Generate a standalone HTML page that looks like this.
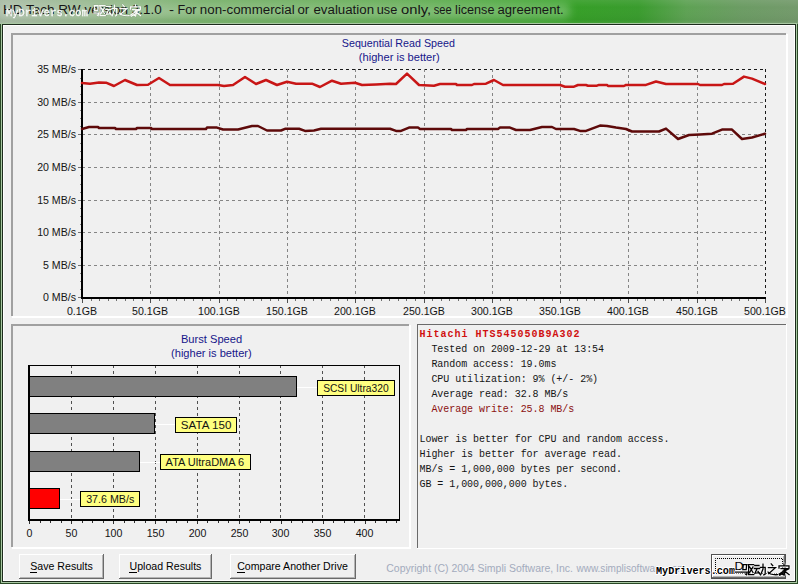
<!DOCTYPE html><html><head><meta charset="utf-8"><style>
html,body{margin:0;padding:0;width:798px;height:584px;overflow:hidden;background:#f0f0f0;}
svg{position:absolute;left:0;top:0;display:block}
text{font-family:"Liberation Sans", sans-serif;}
.m{font-family:"Liberation Mono", monospace;}
</style></head><body>
<svg width="798" height="584" viewBox="0 0 798 584">
<defs>
<linearGradient id="tbh" x1="0" y1="0" x2="798" y2="0" gradientUnits="userSpaceOnUse"><stop offset="0" stop-color="#a2b79e"/><stop offset="0.15" stop-color="#86b07b"/><stop offset="0.25" stop-color="#6caa5e"/><stop offset="0.5" stop-color="#58a648"/><stop offset="0.7" stop-color="#35a026"/><stop offset="0.8" stop-color="#3a9c2e"/><stop offset="0.86" stop-color="#5ea254"/><stop offset="0.93" stop-color="#6c9c64"/><stop offset="1" stop-color="#749a6c"/></linearGradient>
<linearGradient id="tbv" x1="0" y1="0" x2="0" y2="1"><stop offset="0" stop-color="#ffffff" stop-opacity="0.08"/><stop offset="0.3" stop-color="#ffffff" stop-opacity="0.0"/><stop offset="0.8" stop-color="#000000" stop-opacity="0.03"/><stop offset="1" stop-color="#ffffff" stop-opacity="0.1"/></linearGradient>
<filter id="blur4" x="-20%" y="-100%" width="140%" height="300%"><feGaussianBlur stdDeviation="4"/></filter>
<filter id="wm" x="-10%" y="-50%" width="120%" height="200%"><feMorphology in="SourceAlpha" operator="dilate" radius="0.8" result="d"/><feFlood flood-color="#000"/><feComposite in2="d" operator="in" result="o"/><feMerge><feMergeNode in="o"/><feMergeNode in="SourceGraphic"/></feMerge></filter>
<filter id="wmw" x="-10%" y="-50%" width="120%" height="200%"><feMorphology in="SourceAlpha" operator="dilate" radius="0.8" result="d"/><feFlood flood-color="#fff"/><feComposite in2="d" operator="in" result="o"/><feMerge><feMergeNode in="o"/><feMergeNode in="SourceGraphic"/></feMerge></filter>
</defs>
<rect x="0" y="0" width="798" height="584" fill="#6a9c62"/>
<rect x="0" y="0" width="798" height="24" fill="url(#tbh)"/>
<rect x="0" y="0" width="798" height="24" fill="url(#tbv)"/>
<rect x="-2" y="3" width="572" height="16" rx="6" fill="#ffffff" opacity="0.26" filter="url(#blur4)"/>
<g shape-rendering="crispEdges">
<rect x="1" y="23" width="796" height="560" fill="#a9c8a3"/>
<rect x="0" y="24" width="1" height="560" fill="#2a4a26"/><rect x="797" y="24" width="1" height="560" fill="#2a4a26"/><rect x="0" y="583" width="798" height="1" fill="#2a4a26"/>
<rect x="2" y="24" width="794" height="558" fill="#1c2a1c"/>
<rect x="3" y="25" width="792" height="556" fill="#ffffff"/>
<rect x="4" y="26" width="790" height="554" fill="#f0f0f0"/>
<rect x="11" y="33" width="775" height="2" fill="#a0a0a0"/>
<rect x="11" y="33" width="2" height="283" fill="#a0a0a0"/>
<rect x="12" y="316" width="776" height="2" fill="#ffffff"/>
<rect x="786" y="34" width="2" height="284" fill="#ffffff"/>
<rect x="11" y="324" width="398" height="2" fill="#a0a0a0"/>
<rect x="11" y="324" width="2" height="223" fill="#a0a0a0"/>
<rect x="12" y="547" width="399" height="2" fill="#ffffff"/>
<rect x="409" y="325" width="2" height="224" fill="#ffffff"/>
</g>
<g shape-rendering="crispEdges">
<line x1="82" y1="69.5" x2="766" y2="69.5" stroke="#1a1a1a" stroke-width="1" stroke-dasharray="3,3" stroke-dashoffset="0"/>
<line x1="82" y1="102.5" x2="766" y2="102.5" stroke="#858585" stroke-width="1" stroke-dasharray="3,3" stroke-dashoffset="0"/>
<line x1="82" y1="134.5" x2="766" y2="134.5" stroke="#858585" stroke-width="1" stroke-dasharray="3,3" stroke-dashoffset="0"/>
<line x1="82" y1="167.5" x2="766" y2="167.5" stroke="#858585" stroke-width="1" stroke-dasharray="3,3" stroke-dashoffset="0"/>
<line x1="82" y1="200.5" x2="766" y2="200.5" stroke="#858585" stroke-width="1" stroke-dasharray="3,3" stroke-dashoffset="0"/>
<line x1="82" y1="232.5" x2="766" y2="232.5" stroke="#858585" stroke-width="1" stroke-dasharray="3,3" stroke-dashoffset="0"/>
<line x1="82" y1="265.5" x2="766" y2="265.5" stroke="#858585" stroke-width="1" stroke-dasharray="3,3" stroke-dashoffset="0"/>
<line x1="150.5" y1="69" x2="150.5" y2="298" stroke="#858585" stroke-width="1" stroke-dasharray="3,3"/>
<line x1="219.5" y1="69" x2="219.5" y2="298" stroke="#858585" stroke-width="1" stroke-dasharray="3,3"/>
<line x1="287.5" y1="69" x2="287.5" y2="298" stroke="#858585" stroke-width="1" stroke-dasharray="3,3"/>
<line x1="355.5" y1="69" x2="355.5" y2="298" stroke="#858585" stroke-width="1" stroke-dasharray="3,3"/>
<line x1="424.5" y1="69" x2="424.5" y2="298" stroke="#858585" stroke-width="1" stroke-dasharray="3,3"/>
<line x1="492.5" y1="69" x2="492.5" y2="298" stroke="#858585" stroke-width="1" stroke-dasharray="3,3"/>
<line x1="560.5" y1="69" x2="560.5" y2="298" stroke="#858585" stroke-width="1" stroke-dasharray="3,3"/>
<line x1="628.5" y1="69" x2="628.5" y2="298" stroke="#858585" stroke-width="1" stroke-dasharray="3,3"/>
<line x1="697.5" y1="69" x2="697.5" y2="298" stroke="#858585" stroke-width="1" stroke-dasharray="3,3"/>
<line x1="765.5" y1="69" x2="765.5" y2="298" stroke="#1a1a1a" stroke-width="1" stroke-dasharray="3,3"/>
<rect x="78" y="69" width="3" height="1" fill="#707070"/>
<rect x="78" y="102" width="3" height="1" fill="#707070"/>
<rect x="78" y="134" width="3" height="1" fill="#707070"/>
<rect x="78" y="167" width="3" height="1" fill="#707070"/>
<rect x="78" y="200" width="3" height="1" fill="#707070"/>
<rect x="78" y="232" width="3" height="1" fill="#707070"/>
<rect x="78" y="265" width="3" height="1" fill="#707070"/>
<rect x="78" y="297" width="3" height="1" fill="#707070"/>
<rect x="82" y="298" width="1" height="5" fill="#505050"/>
<rect x="150" y="298" width="1" height="5" fill="#505050"/>
<rect x="219" y="298" width="1" height="5" fill="#505050"/>
<rect x="287" y="298" width="1" height="5" fill="#505050"/>
<rect x="355" y="298" width="1" height="5" fill="#505050"/>
<rect x="424" y="298" width="1" height="5" fill="#505050"/>
<rect x="492" y="298" width="1" height="5" fill="#505050"/>
<rect x="560" y="298" width="1" height="5" fill="#505050"/>
<rect x="628" y="298" width="1" height="5" fill="#505050"/>
<rect x="697" y="298" width="1" height="5" fill="#505050"/>
<rect x="765" y="298" width="1" height="5" fill="#505050"/>
<rect x="91" y="299" width="1" height="1.5" fill="#707070"/>
<rect x="99" y="299" width="1" height="1.5" fill="#707070"/>
<rect x="108" y="299" width="1" height="1.5" fill="#707070"/>
<rect x="116" y="299" width="1" height="1.5" fill="#707070"/>
<rect x="125" y="299" width="1" height="1.5" fill="#707070"/>
<rect x="133" y="299" width="1" height="1.5" fill="#707070"/>
<rect x="142" y="299" width="1" height="1.5" fill="#707070"/>
<rect x="159" y="299" width="1" height="1.5" fill="#707070"/>
<rect x="167" y="299" width="1" height="1.5" fill="#707070"/>
<rect x="176" y="299" width="1" height="1.5" fill="#707070"/>
<rect x="184" y="299" width="1" height="1.5" fill="#707070"/>
<rect x="193" y="299" width="1" height="1.5" fill="#707070"/>
<rect x="202" y="299" width="1" height="1.5" fill="#707070"/>
<rect x="210" y="299" width="1" height="1.5" fill="#707070"/>
<rect x="227" y="299" width="1" height="1.5" fill="#707070"/>
<rect x="236" y="299" width="1" height="1.5" fill="#707070"/>
<rect x="244" y="299" width="1" height="1.5" fill="#707070"/>
<rect x="253" y="299" width="1" height="1.5" fill="#707070"/>
<rect x="261" y="299" width="1" height="1.5" fill="#707070"/>
<rect x="270" y="299" width="1" height="1.5" fill="#707070"/>
<rect x="278" y="299" width="1" height="1.5" fill="#707070"/>
<rect x="295" y="299" width="1" height="1.5" fill="#707070"/>
<rect x="304" y="299" width="1" height="1.5" fill="#707070"/>
<rect x="313" y="299" width="1" height="1.5" fill="#707070"/>
<rect x="321" y="299" width="1" height="1.5" fill="#707070"/>
<rect x="330" y="299" width="1" height="1.5" fill="#707070"/>
<rect x="338" y="299" width="1" height="1.5" fill="#707070"/>
<rect x="347" y="299" width="1" height="1.5" fill="#707070"/>
<rect x="364" y="299" width="1" height="1.5" fill="#707070"/>
<rect x="372" y="299" width="1" height="1.5" fill="#707070"/>
<rect x="381" y="299" width="1" height="1.5" fill="#707070"/>
<rect x="389" y="299" width="1" height="1.5" fill="#707070"/>
<rect x="398" y="299" width="1" height="1.5" fill="#707070"/>
<rect x="406" y="299" width="1" height="1.5" fill="#707070"/>
<rect x="415" y="299" width="1" height="1.5" fill="#707070"/>
<rect x="432" y="299" width="1" height="1.5" fill="#707070"/>
<rect x="441" y="299" width="1" height="1.5" fill="#707070"/>
<rect x="449" y="299" width="1" height="1.5" fill="#707070"/>
<rect x="458" y="299" width="1" height="1.5" fill="#707070"/>
<rect x="466" y="299" width="1" height="1.5" fill="#707070"/>
<rect x="475" y="299" width="1" height="1.5" fill="#707070"/>
<rect x="483" y="299" width="1" height="1.5" fill="#707070"/>
<rect x="500" y="299" width="1" height="1.5" fill="#707070"/>
<rect x="509" y="299" width="1" height="1.5" fill="#707070"/>
<rect x="517" y="299" width="1" height="1.5" fill="#707070"/>
<rect x="526" y="299" width="1" height="1.5" fill="#707070"/>
<rect x="534" y="299" width="1" height="1.5" fill="#707070"/>
<rect x="543" y="299" width="1" height="1.5" fill="#707070"/>
<rect x="552" y="299" width="1" height="1.5" fill="#707070"/>
<rect x="569" y="299" width="1" height="1.5" fill="#707070"/>
<rect x="577" y="299" width="1" height="1.5" fill="#707070"/>
<rect x="586" y="299" width="1" height="1.5" fill="#707070"/>
<rect x="594" y="299" width="1" height="1.5" fill="#707070"/>
<rect x="603" y="299" width="1" height="1.5" fill="#707070"/>
<rect x="611" y="299" width="1" height="1.5" fill="#707070"/>
<rect x="620" y="299" width="1" height="1.5" fill="#707070"/>
<rect x="637" y="299" width="1" height="1.5" fill="#707070"/>
<rect x="645" y="299" width="1" height="1.5" fill="#707070"/>
<rect x="654" y="299" width="1" height="1.5" fill="#707070"/>
<rect x="663" y="299" width="1" height="1.5" fill="#707070"/>
<rect x="671" y="299" width="1" height="1.5" fill="#707070"/>
<rect x="680" y="299" width="1" height="1.5" fill="#707070"/>
<rect x="688" y="299" width="1" height="1.5" fill="#707070"/>
<rect x="705" y="299" width="1" height="1.5" fill="#707070"/>
<rect x="714" y="299" width="1" height="1.5" fill="#707070"/>
<rect x="722" y="299" width="1" height="1.5" fill="#707070"/>
<rect x="731" y="299" width="1" height="1.5" fill="#707070"/>
<rect x="739" y="299" width="1" height="1.5" fill="#707070"/>
<rect x="748" y="299" width="1" height="1.5" fill="#707070"/>
<rect x="756" y="299" width="1" height="1.5" fill="#707070"/>
<rect x="80" y="289" width="1" height="1" fill="#8a8a8a"/>
<rect x="80" y="281" width="1" height="1" fill="#8a8a8a"/>
<rect x="80" y="273" width="1" height="1" fill="#8a8a8a"/>
<rect x="80" y="257" width="1" height="1" fill="#8a8a8a"/>
<rect x="80" y="249" width="1" height="1" fill="#8a8a8a"/>
<rect x="80" y="241" width="1" height="1" fill="#8a8a8a"/>
<rect x="80" y="224" width="1" height="1" fill="#8a8a8a"/>
<rect x="80" y="216" width="1" height="1" fill="#8a8a8a"/>
<rect x="80" y="208" width="1" height="1" fill="#8a8a8a"/>
<rect x="80" y="192" width="1" height="1" fill="#8a8a8a"/>
<rect x="80" y="184" width="1" height="1" fill="#8a8a8a"/>
<rect x="80" y="175" width="1" height="1" fill="#8a8a8a"/>
<rect x="80" y="159" width="1" height="1" fill="#8a8a8a"/>
<rect x="80" y="151" width="1" height="1" fill="#8a8a8a"/>
<rect x="80" y="143" width="1" height="1" fill="#8a8a8a"/>
<rect x="80" y="126" width="1" height="1" fill="#8a8a8a"/>
<rect x="80" y="118" width="1" height="1" fill="#8a8a8a"/>
<rect x="80" y="110" width="1" height="1" fill="#8a8a8a"/>
<rect x="80" y="94" width="1" height="1" fill="#8a8a8a"/>
<rect x="80" y="86" width="1" height="1" fill="#8a8a8a"/>
<rect x="80" y="78" width="1" height="1" fill="#8a8a8a"/>
<rect x="81" y="69" width="2" height="230" fill="#000"/>
<rect x="81" y="297" width="685" height="2" fill="#000"/>
</g>
<polyline points="82.0,83.1 90.0,83.7 99.0,82.5 106.0,82.7 114.0,86.0 125.0,80.0 137.0,85.0 148.0,84.7 159.0,78.0 170.0,85.0 218.0,85.0 224.0,86.0 233.0,85.0 245.0,77.0 256.0,84.0 266.0,80.0 277.0,85.0 287.0,81.7 296.0,83.7 312.0,83.7 320.0,87.0 332.0,80.7 341.0,83.7 355.0,82.7 362.0,85.0 376.0,84.5 390.0,83.7 396.0,84.0 407.0,73.6 419.0,85.0 434.0,85.7 440.0,84.0 456.0,84.0 457.0,85.0 472.0,85.0 474.0,84.0 486.0,83.7 494.0,80.0 503.0,85.0 560.0,85.0 565.0,86.7 574.0,86.7 578.0,85.0 586.0,85.0 588.0,85.7 597.0,85.7 599.0,84.9 607.0,84.9 608.0,86.0 624.0,86.0 626.0,84.9 646.0,84.9 656.0,81.5 666.0,84.0 698.0,84.0 700.0,85.0 722.0,85.0 724.0,84.0 733.0,83.7 744.0,76.6 752.0,78.6 765.0,84.0" fill="none" stroke="#c81616" stroke-width="2.5" stroke-linejoin="round" stroke-linecap="round"/>
<polyline points="82.0,129.0 89.0,127.0 98.0,127.0 99.0,128.0 115.0,128.0 116.0,129.0 136.0,129.0 137.0,128.0 151.0,128.0 152.0,129.0 206.0,129.0 207.0,127.6 217.0,127.6 223.0,129.5 238.0,129.5 252.0,126.0 258.0,126.0 267.0,130.5 281.0,130.5 285.0,128.8 299.0,128.8 305.0,130.9 314.0,130.5 321.0,128.8 390.0,128.8 396.0,130.9 401.0,130.9 409.0,127.6 418.0,127.6 420.0,129.0 451.0,129.0 452.0,130.0 466.0,130.0 467.0,129.0 498.0,129.0 500.0,127.6 510.0,127.6 516.0,130.0 530.0,130.0 538.0,128.0 542.0,127.0 552.0,127.0 556.0,129.0 574.0,129.0 580.0,130.9 586.0,130.9 600.0,125.6 607.0,126.0 616.0,127.6 626.0,129.0 632.0,131.5 659.0,131.5 666.0,128.6 678.0,139.0 689.0,135.0 700.0,134.5 712.0,133.7 722.0,129.6 732.0,129.6 742.0,139.0 752.0,137.5 765.0,133.7" fill="none" stroke="#5e0a0a" stroke-width="2.5" stroke-linejoin="round" stroke-linecap="round"/>
<text x="76" y="73" text-anchor="end" font-size="10.6px" fill="#141414">35 MB/s</text>
<text x="76" y="106" text-anchor="end" font-size="10.6px" fill="#141414">30 MB/s</text>
<text x="76" y="138" text-anchor="end" font-size="10.6px" fill="#141414">25 MB/s</text>
<text x="76" y="171" text-anchor="end" font-size="10.6px" fill="#141414">20 MB/s</text>
<text x="76" y="204" text-anchor="end" font-size="10.6px" fill="#141414">15 MB/s</text>
<text x="76" y="236" text-anchor="end" font-size="10.6px" fill="#141414">10 MB/s</text>
<text x="76" y="269" text-anchor="end" font-size="10.6px" fill="#141414">5 MB/s</text>
<text x="76" y="301" text-anchor="end" font-size="10.6px" fill="#141414">0 MB/s</text>
<text x="82" y="315" text-anchor="middle" font-size="10.6px" fill="#141414">0.1GB</text>
<text x="150" y="315" text-anchor="middle" font-size="10.6px" fill="#141414">50.1GB</text>
<text x="219" y="315" text-anchor="middle" font-size="10.6px" fill="#141414">100.1GB</text>
<text x="287" y="315" text-anchor="middle" font-size="10.6px" fill="#141414">150.1GB</text>
<text x="355" y="315" text-anchor="middle" font-size="10.6px" fill="#141414">200.1GB</text>
<text x="424" y="315" text-anchor="middle" font-size="10.6px" fill="#141414">250.1GB</text>
<text x="492" y="315" text-anchor="middle" font-size="10.6px" fill="#141414">300.1GB</text>
<text x="560" y="315" text-anchor="middle" font-size="10.6px" fill="#141414">350.1GB</text>
<text x="628" y="315" text-anchor="middle" font-size="10.6px" fill="#141414">400.1GB</text>
<text x="697" y="315" text-anchor="middle" font-size="10.6px" fill="#141414">450.1GB</text>
<text x="765" y="315" text-anchor="middle" font-size="10.6px" fill="#141414">500.1GB</text>
<text x="341.82" y="47.00" font-size="10.6px" textLength="113.07" lengthAdjust="spacingAndGlyphs" fill="#16168a"  xml:space="preserve">Sequential Read Speed</text>
<text x="358.83" y="61.00" font-size="10.6px" textLength="80.84" lengthAdjust="spacingAndGlyphs" fill="#16168a"  xml:space="preserve">(higher is better)</text>
<text x="180.91" y="343.00" font-size="10.6px" textLength="61.25" lengthAdjust="spacingAndGlyphs" fill="#16168a"  xml:space="preserve">Burst Speed</text>
<text x="171.04" y="357.00" font-size="10.6px" textLength="80.64" lengthAdjust="spacingAndGlyphs" fill="#16168a"  xml:space="preserve">(higher is better)</text>
<g shape-rendering="crispEdges">
<rect x="29" y="365" width="371" height="155" fill="#f0f0f0"/>
<line x1="71.5" y1="366" x2="71.5" y2="520" stroke="#505050" stroke-width="1" stroke-dasharray="3,3" stroke-dashoffset="1"/>
<line x1="113.5" y1="366" x2="113.5" y2="520" stroke="#505050" stroke-width="1" stroke-dasharray="3,3" stroke-dashoffset="1"/>
<line x1="155.5" y1="366" x2="155.5" y2="520" stroke="#505050" stroke-width="1" stroke-dasharray="3,3" stroke-dashoffset="1"/>
<line x1="197.5" y1="366" x2="197.5" y2="520" stroke="#505050" stroke-width="1" stroke-dasharray="3,3" stroke-dashoffset="1"/>
<line x1="239.5" y1="366" x2="239.5" y2="520" stroke="#505050" stroke-width="1" stroke-dasharray="3,3" stroke-dashoffset="1"/>
<line x1="280.5" y1="366" x2="280.5" y2="520" stroke="#505050" stroke-width="1" stroke-dasharray="3,3" stroke-dashoffset="1"/>
<line x1="322.5" y1="366" x2="322.5" y2="520" stroke="#505050" stroke-width="1" stroke-dasharray="3,3" stroke-dashoffset="1"/>
<line x1="364.5" y1="366" x2="364.5" y2="520" stroke="#505050" stroke-width="1" stroke-dasharray="3,3" stroke-dashoffset="1"/>
<rect x="297" y="387" width="20" height="1" fill="#ffffff"/>
<rect x="29.5" y="376.5" width="267.0" height="20" fill="#808080" stroke="#000" stroke-width="1"/>
<rect x="317.5" y="380.5" width="77" height="15" fill="#ffff80" stroke="#000" stroke-width="1"/>
<rect x="155" y="424" width="20" height="1" fill="#ffffff"/>
<rect x="29.5" y="413.5" width="125.0" height="20" fill="#808080" stroke="#000" stroke-width="1"/>
<rect x="175.5" y="417.5" width="61" height="15" fill="#ffff80" stroke="#000" stroke-width="1"/>
<rect x="140" y="462" width="20" height="1" fill="#ffffff"/>
<rect x="29.5" y="451.5" width="110.0" height="20" fill="#808080" stroke="#000" stroke-width="1"/>
<rect x="160.5" y="454.5" width="90" height="15" fill="#ffff80" stroke="#000" stroke-width="1"/>
<rect x="60" y="499" width="20" height="1" fill="#ffffff"/>
<rect x="29.5" y="488.5" width="30.0" height="20" fill="#ff0000" stroke="#000" stroke-width="1"/>
<rect x="80.5" y="491.5" width="59" height="15" fill="#ffff80" stroke="#000" stroke-width="1"/>
<rect x="28" y="365" width="372" height="1" fill="#000"/>
<rect x="399" y="365" width="1" height="155" fill="#000"/>
<rect x="28" y="365" width="2" height="156" fill="#000"/>
<rect x="28" y="519" width="372" height="2" fill="#000"/>
<rect x="29" y="521" width="1" height="3" fill="#303030"/>
<rect x="40" y="521" width="1" height="2" fill="#303030"/>
<rect x="50" y="521" width="1" height="2" fill="#303030"/>
<rect x="61" y="521" width="1" height="2" fill="#303030"/>
<rect x="71" y="521" width="1" height="3" fill="#303030"/>
<rect x="82" y="521" width="1" height="2" fill="#303030"/>
<rect x="92" y="521" width="1" height="2" fill="#303030"/>
<rect x="103" y="521" width="1" height="2" fill="#303030"/>
<rect x="113" y="521" width="1" height="3" fill="#303030"/>
<rect x="124" y="521" width="1" height="2" fill="#303030"/>
<rect x="134" y="521" width="1" height="2" fill="#303030"/>
<rect x="145" y="521" width="1" height="2" fill="#303030"/>
<rect x="155" y="521" width="1" height="3" fill="#303030"/>
<rect x="166" y="521" width="1" height="2" fill="#303030"/>
<rect x="176" y="521" width="1" height="2" fill="#303030"/>
<rect x="187" y="521" width="1" height="2" fill="#303030"/>
<rect x="197" y="521" width="1" height="3" fill="#303030"/>
<rect x="207" y="521" width="1" height="2" fill="#303030"/>
<rect x="218" y="521" width="1" height="2" fill="#303030"/>
<rect x="228" y="521" width="1" height="2" fill="#303030"/>
<rect x="239" y="521" width="1" height="3" fill="#303030"/>
<rect x="249" y="521" width="1" height="2" fill="#303030"/>
<rect x="260" y="521" width="1" height="2" fill="#303030"/>
<rect x="270" y="521" width="1" height="2" fill="#303030"/>
<rect x="281" y="521" width="1" height="3" fill="#303030"/>
<rect x="291" y="521" width="1" height="2" fill="#303030"/>
<rect x="302" y="521" width="1" height="2" fill="#303030"/>
<rect x="312" y="521" width="1" height="2" fill="#303030"/>
<rect x="323" y="521" width="1" height="3" fill="#303030"/>
<rect x="333" y="521" width="1" height="2" fill="#303030"/>
<rect x="344" y="521" width="1" height="2" fill="#303030"/>
<rect x="354" y="521" width="1" height="2" fill="#303030"/>
<rect x="365" y="521" width="1" height="3" fill="#303030"/>
<rect x="375" y="521" width="1" height="2" fill="#303030"/>
<rect x="386" y="521" width="1" height="2" fill="#303030"/>
<rect x="396" y="521" width="1" height="2" fill="#303030"/>
</g>
<text x="323.14" y="392.00" font-size="10.6px" textLength="65.54" lengthAdjust="spacingAndGlyphs" fill="#141414"  xml:space="preserve">SCSI Ultra320</text>
<text x="180.88" y="429.00" font-size="10.6px" textLength="50.52" lengthAdjust="spacingAndGlyphs" fill="#141414"  xml:space="preserve">SATA 150</text>
<text x="165.60" y="466.00" font-size="10.6px" textLength="78.66" lengthAdjust="spacingAndGlyphs" fill="#141414"  xml:space="preserve">ATA UltraDMA 6</text>
<text x="86.17" y="503.00" font-size="10.6px" textLength="48.12" lengthAdjust="spacingAndGlyphs" fill="#141414"  xml:space="preserve">37.6 MB/s</text>
<text x="29.5" y="537" text-anchor="middle" font-size="10.6px" fill="#141414">0</text>
<text x="71.5" y="537" text-anchor="middle" font-size="10.6px" fill="#141414">50</text>
<text x="113.5" y="537" text-anchor="middle" font-size="10.6px" fill="#141414">100</text>
<text x="155.5" y="537" text-anchor="middle" font-size="10.6px" fill="#141414">150</text>
<text x="197.5" y="537" text-anchor="middle" font-size="10.6px" fill="#141414">200</text>
<text x="239.5" y="537" text-anchor="middle" font-size="10.6px" fill="#141414">250</text>
<text x="280.5" y="537" text-anchor="middle" font-size="10.6px" fill="#141414">300</text>
<text x="322.5" y="537" text-anchor="middle" font-size="10.6px" fill="#141414">350</text>
<text x="364.5" y="537" text-anchor="middle" font-size="10.6px" fill="#141414">400</text>
<g shape-rendering="crispEdges">
<rect x="417" y="324" width="370" height="225" fill="#ffffff"/>
<rect x="417" y="324" width="369" height="224" fill="#6a6a6a"/>
<rect x="418" y="325" width="368" height="223" fill="#f0f0f0"/>
</g>
<text x="419.5" y="337" font-size="10px" class="m" font-weight="bold" fill="#d01010" letter-spacing="1px">Hitachi HTS545050B9A302</text>
<text x="419.5" y="352" font-size="10px" class="m" letter-spacing="-0.05px" fill="#141414" xml:space="preserve">  Tested on 2009-12-29 at 13:54</text>
<text x="419.5" y="367" font-size="10px" class="m" letter-spacing="-0.05px" fill="#141414" xml:space="preserve">  Random access: 19.0ms</text>
<text x="419.5" y="382" font-size="10px" class="m" letter-spacing="-0.05px" fill="#141414" xml:space="preserve">  CPU utilization: 9% (+/- 2%)</text>
<text x="419.5" y="397" font-size="10px" class="m" letter-spacing="-0.05px" fill="#141414" xml:space="preserve">  Average read: 32.8 MB/s</text>
<text x="419.5" y="412" font-size="10px" class="m" letter-spacing="-0.05px" fill="#8c1010" xml:space="preserve">  Average write: 25.8 MB/s</text>
<text x="419.5" y="442" font-size="10px" class="m" letter-spacing="-0.05px" fill="#141414" xml:space="preserve">Lower is better for CPU and random access.</text>
<text x="419.5" y="457" font-size="10px" class="m" letter-spacing="-0.05px" fill="#141414" xml:space="preserve">Higher is better for average read.</text>
<text x="419.5" y="472" font-size="10px" class="m" letter-spacing="-0.05px" fill="#141414" xml:space="preserve">MB/s = 1,000,000 bytes per second.</text>
<text x="419.5" y="487" font-size="10px" class="m" letter-spacing="-0.05px" fill="#141414" xml:space="preserve">GB = 1,000,000,000 bytes.</text>
<g shape-rendering="crispEdges">
<rect x="19" y="554" width="85" height="25" fill="#6a6a6a"/>
<rect x="19" y="554" width="84" height="24" fill="#ffffff"/>
<rect x="20" y="555" width="83" height="23" fill="#b4b4b4"/>
<rect x="20" y="555" width="82" height="22" fill="#f0f0f0"/>
</g>
<g shape-rendering="crispEdges">
<rect x="119" y="554" width="93" height="25" fill="#6a6a6a"/>
<rect x="119" y="554" width="92" height="24" fill="#ffffff"/>
<rect x="120" y="555" width="91" height="23" fill="#b4b4b4"/>
<rect x="120" y="555" width="90" height="22" fill="#f0f0f0"/>
</g>
<g shape-rendering="crispEdges">
<rect x="230" y="554" width="126" height="25" fill="#6a6a6a"/>
<rect x="230" y="554" width="125" height="24" fill="#ffffff"/>
<rect x="231" y="555" width="124" height="23" fill="#b4b4b4"/>
<rect x="231" y="555" width="123" height="22" fill="#f0f0f0"/>
</g>
<g shape-rendering="crispEdges">
<rect x="711" y="554" width="75" height="25" fill="#505050"/>
<rect x="712" y="555" width="73" height="23" fill="#6a6a6a"/>
<rect x="712" y="555" width="72" height="22" fill="#ffffff"/>
<rect x="713" y="556" width="71" height="21" fill="#b4b4b4"/>
<rect x="713" y="556" width="70" height="20" fill="#f0f0f0"/>
</g>
<rect x="715.5" y="558.5" width="67" height="15" fill="none" stroke="#000" stroke-width="1" stroke-dasharray="1,1" stroke-dashoffset="0.5"/>
<text x="61.5" y="570" text-anchor="middle" font-size="10.6px" fill="#000">Save Results</text>
<text x="165.5" y="570" text-anchor="middle" font-size="10.6px" fill="#000">Upload Results</text>
<text x="292.5" y="570" text-anchor="middle" font-size="10.6px" fill="#000">Compare Another Drive</text>
<g shape-rendering="crispEdges"><rect x="30" y="572" width="7" height="1" fill="#000"/><rect x="129" y="572" width="8" height="1" fill="#000"/><rect x="237" y="572" width="8" height="1" fill="#000"/></g>
<text x="386.28" y="572.00" font-size="11px" textLength="186.67" lengthAdjust="spacingAndGlyphs" fill="#a3abbd"  xml:space="preserve">Copyright (C) 2004 Simpli Software, Inc.</text>
<text x="576.4" y="572" font-size="11px" textLength="109.3" lengthAdjust="spacingAndGlyphs" fill="#a3abbd">www.simplisoftware.com</text>
<text x="2.92" y="14.00" font-size="12px" textLength="158.97" lengthAdjust="spacingAndGlyphs" fill="#161616"  xml:space="preserve">HD Tach RW version 3.1.0</text>
<text x="169.12" y="14.00" font-size="12px" textLength="5.03" lengthAdjust="spacingAndGlyphs" fill="#161616"  xml:space="preserve">-</text>
<text x="177.48" y="14.00" font-size="12px" textLength="19.07" lengthAdjust="spacingAndGlyphs" fill="#161616"  xml:space="preserve">For</text>
<text x="199.83" y="14.00" font-size="12px" textLength="94.78" lengthAdjust="spacingAndGlyphs" fill="#161616"  xml:space="preserve">non-commercial</text>
<text x="297.47" y="14.00" font-size="12px" textLength="11.78" lengthAdjust="spacingAndGlyphs" fill="#161616"  xml:space="preserve">or</text>
<text x="313.47" y="14.00" font-size="12px" textLength="60.58" lengthAdjust="spacingAndGlyphs" fill="#161616"  xml:space="preserve">evaluation</text>
<text x="376.77" y="14.00" font-size="12px" textLength="20.53" lengthAdjust="spacingAndGlyphs" fill="#161616"  xml:space="preserve">use</text>
<text x="401.11" y="14.00" font-size="12px" textLength="30.09" lengthAdjust="spacingAndGlyphs" fill="#161616"  xml:space="preserve">only,</text>
<text x="433.77" y="14.00" font-size="12px" textLength="17.96" lengthAdjust="spacingAndGlyphs" fill="#161616"  xml:space="preserve">see</text>
<text x="455.08" y="14.00" font-size="12px" textLength="39.33" lengthAdjust="spacingAndGlyphs" fill="#161616"  xml:space="preserve">license</text>
<text x="497.48" y="14.00" font-size="12px" textLength="66.25" lengthAdjust="spacingAndGlyphs" fill="#161616"  xml:space="preserve">agreement.</text>
<g opacity="0.95">
<text x="6.6" y="16.1" class="m" font-size="11px" textLength="82" lengthAdjust="spacingAndGlyphs" fill="#2a3a28" fill-opacity="0.35">MyDrivers.com</text>
<text x="6" y="15.5" class="m" font-size="11px" textLength="82" lengthAdjust="spacingAndGlyphs" fill="#ffffff" stroke="#ffffff" stroke-width="0.35">MyDrivers.com</text>
<path d="M0.8,1.2 H4.6 L4.2,6.2 H0.8 L1.2,1.2 M0.3,8.6 H5.2 L4.6,11.2 L3.6,10.6 M6.2,1.2 H11.6 M6.6,1.2 V11.2 H11.8 M7.6,3.4 L11,9 M11,3.4 L7.6,9" transform="translate(93.50,4.50) scale(1.000)" fill="none" stroke="#3a4a38" stroke-width="2.00" stroke-linecap="square" stroke-opacity="0.25"/>
<path d="M0.8,2 H5 M0.3,5 H5.6 M3,5.2 L1,9.8 L5.2,9.2 M4,7.8 L5.6,10.4 M6.4,3.8 H11.2 V10.6 L9.8,11.4 M9,0.6 V5.6 L6.6,11.4" transform="translate(105.50,4.50) scale(1.000)" fill="none" stroke="#3a4a38" stroke-width="2.00" stroke-linecap="square" stroke-opacity="0.25"/>
<path d="M5.2,0.4 L6.8,2.2 M2.4,4.2 H9.4 L2.6,10.2 M2,8.6 Q3.4,11.6 11.6,11.2" transform="translate(117.50,4.50) scale(1.000)" fill="none" stroke="#3a4a38" stroke-width="2.00" stroke-linecap="square" stroke-opacity="0.25"/>
<path d="M6,0.4 V2.2 M1,4.6 V2.4 H11 V4.6 M3,5.2 H9.2 L5,7.6 M6.2,5.6 Q7.4,8.6 6.2,11.6 L4.6,10.8 M5.6,7.6 L1.2,10.6 M6,9.2 L1.8,11.8 M7,7.8 L11.2,11.2 M7.8,6.8 L10.6,5.4" transform="translate(129.50,4.50) scale(1.000)" fill="none" stroke="#3a4a38" stroke-width="2.00" stroke-linecap="square" stroke-opacity="0.25"/>
<path d="M0.8,1.2 H4.6 L4.2,6.2 H0.8 L1.2,1.2 M0.3,8.6 H5.2 L4.6,11.2 L3.6,10.6 M6.2,1.2 H11.6 M6.6,1.2 V11.2 H11.8 M7.6,3.4 L11,9 M11,3.4 L7.6,9" transform="translate(93.50,4.50) scale(1.000)" fill="none" stroke="#ffffff" stroke-width="1.20" stroke-linecap="square" />
<path d="M0.8,2 H5 M0.3,5 H5.6 M3,5.2 L1,9.8 L5.2,9.2 M4,7.8 L5.6,10.4 M6.4,3.8 H11.2 V10.6 L9.8,11.4 M9,0.6 V5.6 L6.6,11.4" transform="translate(105.50,4.50) scale(1.000)" fill="none" stroke="#ffffff" stroke-width="1.20" stroke-linecap="square" />
<path d="M5.2,0.4 L6.8,2.2 M2.4,4.2 H9.4 L2.6,10.2 M2,8.6 Q3.4,11.6 11.6,11.2" transform="translate(117.50,4.50) scale(1.000)" fill="none" stroke="#ffffff" stroke-width="1.20" stroke-linecap="square" />
<path d="M6,0.4 V2.2 M1,4.6 V2.4 H11 V4.6 M3,5.2 H9.2 L5,7.6 M6.2,5.6 Q7.4,8.6 6.2,11.6 L4.6,10.8 M5.6,7.6 L1.2,10.6 M6,9.2 L1.8,11.8 M7,7.8 L11.2,11.2 M7.8,6.8 L10.6,5.4" transform="translate(129.50,4.50) scale(1.000)" fill="none" stroke="#ffffff" stroke-width="1.20" stroke-linecap="square" />
</g>
<text x="656" y="574" class="m" font-size="10px" font-weight="bold" textLength="79" lengthAdjust="spacingAndGlyphs" fill="none" stroke="#ffffff" stroke-width="2" stroke-linejoin="round">MyDrivers.com</text>
<text x="656" y="574" class="m" font-size="10px" font-weight="bold" textLength="79" lengthAdjust="spacingAndGlyphs" fill="#000000">MyDrivers.com</text>
<path d="M0.8,1.2 H4.6 L4.2,6.2 H0.8 L1.2,1.2 M0.3,8.6 H5.2 L4.6,11.2 L3.6,10.6 M6.2,1.2 H11.6 M6.6,1.2 V11.2 H11.8 M7.6,3.4 L11,9 M11,3.4 L7.6,9" transform="translate(742.00,563.50) scale(1.000)" fill="none" stroke="#ffffff" stroke-width="2.40" stroke-linecap="square" />
<path d="M0.8,2 H5 M0.3,5 H5.6 M3,5.2 L1,9.8 L5.2,9.2 M4,7.8 L5.6,10.4 M6.4,3.8 H11.2 V10.6 L9.8,11.4 M9,0.6 V5.6 L6.6,11.4" transform="translate(754.00,563.50) scale(1.000)" fill="none" stroke="#ffffff" stroke-width="2.40" stroke-linecap="square" />
<path d="M5.2,0.4 L6.8,2.2 M2.4,4.2 H9.4 L2.6,10.2 M2,8.6 Q3.4,11.6 11.6,11.2" transform="translate(766.00,563.50) scale(1.000)" fill="none" stroke="#ffffff" stroke-width="2.40" stroke-linecap="square" />
<path d="M6,0.4 V2.2 M1,4.6 V2.4 H11 V4.6 M3,5.2 H9.2 L5,7.6 M6.2,5.6 Q7.4,8.6 6.2,11.6 L4.6,10.8 M5.6,7.6 L1.2,10.6 M6,9.2 L1.8,11.8 M7,7.8 L11.2,11.2 M7.8,6.8 L10.6,5.4" transform="translate(778.00,563.50) scale(1.000)" fill="none" stroke="#ffffff" stroke-width="2.40" stroke-linecap="square" />
<rect x="734.5" y="570.5" width="8" height="3" fill="#ffffff"/>
<text x="734.49" y="569.50" font-size="10.6px" textLength="9.10" lengthAdjust="spacingAndGlyphs" fill="#000"  xml:space="preserve">D</text>
<path d="M0.8,1.2 H4.6 L4.2,6.2 H0.8 L1.2,1.2 M0.3,8.6 H5.2 L4.6,11.2 L3.6,10.6 M6.2,1.2 H11.6 M6.6,1.2 V11.2 H11.8 M7.6,3.4 L11,9 M11,3.4 L7.6,9" transform="translate(742.00,563.50) scale(1.000)" fill="none" stroke="#000000" stroke-width="1.30" stroke-linecap="square" />
<path d="M0.8,2 H5 M0.3,5 H5.6 M3,5.2 L1,9.8 L5.2,9.2 M4,7.8 L5.6,10.4 M6.4,3.8 H11.2 V10.6 L9.8,11.4 M9,0.6 V5.6 L6.6,11.4" transform="translate(754.00,563.50) scale(1.000)" fill="none" stroke="#000000" stroke-width="1.30" stroke-linecap="square" />
<path d="M5.2,0.4 L6.8,2.2 M2.4,4.2 H9.4 L2.6,10.2 M2,8.6 Q3.4,11.6 11.6,11.2" transform="translate(766.00,563.50) scale(1.000)" fill="none" stroke="#000000" stroke-width="1.30" stroke-linecap="square" />
<path d="M6,0.4 V2.2 M1,4.6 V2.4 H11 V4.6 M3,5.2 H9.2 L5,7.6 M6.2,5.6 Q7.4,8.6 6.2,11.6 L4.6,10.8 M5.6,7.6 L1.2,10.6 M6,9.2 L1.8,11.8 M7,7.8 L11.2,11.2 M7.8,6.8 L10.6,5.4" transform="translate(778.00,563.50) scale(1.000)" fill="none" stroke="#000000" stroke-width="1.30" stroke-linecap="square" />
<rect x="735" y="571.5" width="7" height="1.2" fill="#000000"/>
</svg></body></html>
